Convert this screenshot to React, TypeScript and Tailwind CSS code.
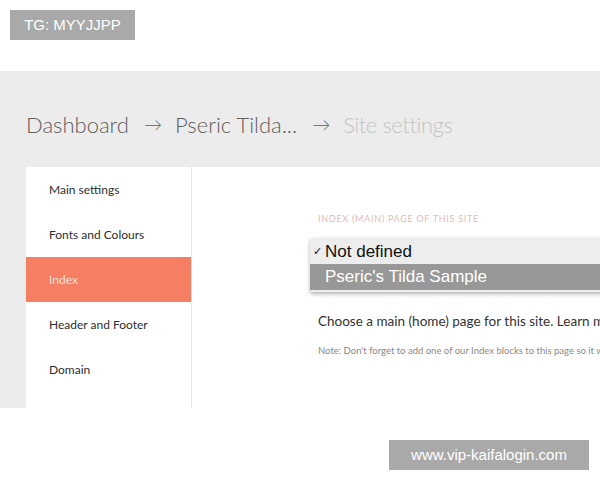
import React from "react";

const menu = ["Main settings", "Fonts and Colours", "Index", "Header and Footer", "Domain"];

const SideItem: React.FC<{ label: string, active?: boolean }> = ({ label, active }) => {
    return (<div className={"h-[45px] flex items-center pl-[23px] text-[12px] " + (active ? "bg-[#f67e62] text-[#fde0d6]" : "text-[#2e2e2e]")}>
        {label}
    </div>);
}

const App: React.FC = () => {
    return (
        <div className="w-[600px] h-[480px] bg-white overflow-hidden flex flex-col font-['Lato',sans-serif] relative">
            <div className="h-[71px] shrink-0 pt-[10px] pl-[10px]">
                <div className="w-[125px] h-[30px] bg-[#a9a9a9] text-white text-[15px] flex items-center justify-center font-['Liberation_Sans',sans-serif]">TG: MYYJJPP</div>
            </div>

            <div className="h-[337px] shrink-0 bg-[#ececec] flex flex-col">
                <div className="h-[96px] shrink-0 flex items-center pl-[26px] pt-[10px] text-[22px] font-light text-[#5e5e5e] whitespace-nowrap">
                    <span>Dashboard</span>
                    <span className="ml-[15px] mr-[13px] text-[18px]">→</span>
                    <span>Pseric Tilda...</span>
                    <span className="ml-[15px] mr-[13px] text-[18px]">→</span>
                    <span className="text-[#c4c4c4] tracking-[-0.02em]">Site settings</span>
                </div>

                <div className="flex flex-1 ml-[26px] bg-white">
                    <div className="w-[166px] shrink-0 border-r border-[#e4e4e4]">
                        {menu.map((m) => <SideItem key={m} label={m} active={m == "Index"} />)}
                    </div>
                    <div className="flex-1 flex flex-col pt-[45px] pl-[126px] min-w-0">
                        <div className="text-[9px] tracking-[0.08em] text-[#e3bdb4] whitespace-nowrap">INDEX (MAIN) PAGE OF THIS SITE</div>
                        <div className="mt-[12px] -ml-[8px] w-[320px] h-[54px] bg-[#ededed] rounded-[3px] shadow-[0_2px_4px_rgba(0,0,0,0.3)] py-[2px] font-['Liberation_Sans',sans-serif] text-[17px]">
                            <div className="h-[24px] flex items-center text-[#111] whitespace-nowrap">
                                <span className="w-[15px] text-[11px] pl-[3px]">✓</span>
                                <span>Not defined</span>
                            </div>
                            <div className="h-[26px] flex items-center bg-[#989898] text-white pl-[15px] whitespace-nowrap">Pseric's Tilda Sample</div>
                        </div>
                        <div className="mt-[19px] text-[13.5px] text-[#333] whitespace-nowrap">Choose a main (home) page for this site. Learn more</div>
                        <div className="mt-[13px] text-[9.5px] text-[#8a8a8a] whitespace-nowrap">Note: Don't forget to add one of our Index blocks to this page so it will work</div>
                    </div>
                </div>
            </div>

            <div className="flex-1 flex justify-end items-start pt-[32px] pr-[11px]">
                <div className="w-[200px] h-[30px] bg-[#a9a9a9] text-white text-[15px] flex items-center justify-center font-['Liberation_Sans',sans-serif]">www.vip-kaifalogin.com</div>
            </div>
        </div>
    );
};

export default App;
